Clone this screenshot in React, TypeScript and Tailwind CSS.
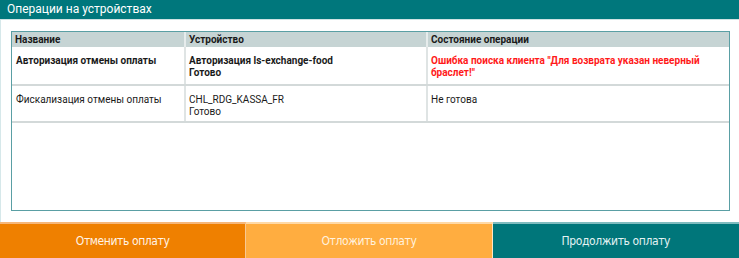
import React from "react";

const rows = [
  {
    name: "Авторизация отмены оплаты",
    device: ["Авторизация ls-exchange-food", "Готово"],
    state: 'Ошибка поиска клиента "Для возврата указан неверный браслет!"',
    error: true,
    h: "h-[39px]",
  },
  {
    name: "Фискализация отмены оплаты",
    device: ["CHL_RDG_KASSA_FR", "Готово"],
    state: "Не готова",
    error: false,
    h: "h-[37px]",
  },
];

const App = () => {
  return (
    <div className="w-[739px] h-[258px] flex flex-col bg-white font-['Roboto',sans-serif] text-[#1a1a1a]">
      <div className="h-[20px] bg-[#00777c] border-b border-[#cfe2e3] pl-[7px] text-white text-[12px] leading-[19px]">
        Операции на устройствах
      </div>
      <div className="flex-1 flex flex-col border-l border-[#d6e8ea] pl-[10px] pr-[9px] pt-[11px] pb-[11px]">
        <div className="flex-1 border border-[#5a9fa4] bg-white">
          <div className="grid grid-cols-[174px_242px_1fr] bg-[#c6d4d4] h-[15px] text-[10px] font-bold leading-[15px]">
            <div className="pl-[3px] border-r-2 border-[#e6ecec]">Название</div>
            <div className="pl-[3px] border-r-2 border-[#e6ecec]">Устройство</div>
            <div className="pl-[3px]">Состояние операции</div>
          </div>
          {rows.map((row, i) => (
            <div
              key={i}
              className={`grid grid-cols-[174px_242px_1fr] border-b-2 border-[#d3d9d9] text-[10px] leading-[12px] ${row.h}`}
            >
              <div className={`pl-[4px] pt-[8px] border-r-2 border-[#dfe4e4] ${row.error ? "font-bold" : ""}`}>
                {row.name}
              </div>
              <div className={`pl-[3px] pt-[8px] border-r-2 border-[#dfe4e4] ${row.error ? "font-bold" : ""}`}>
                {row.device.map((d, j) => (
                  <div key={j}>{d}</div>
                ))}
              </div>
              <div
                className={`pl-[3px] pr-[8px] pt-[8px] ${row.error ? "font-bold text-[#ff1a1a]" : ""}`}
              >
                {row.state}
              </div>
            </div>
          ))}
        </div>
      </div>
      <div className="h-[36px] grid grid-cols-3 text-[12px] tracking-[-0.4px] font-['DejaVu_Sans_Condensed','DejaVu_Sans',sans-serif] [font-stretch:condensed]">
        <button className="bg-[#ef8000] border-t-2 border-[#f6b77a] text-[#fff3e6] border-r border-r-[#f8c893]">
          Отменить оплату
        </button>
        <button className="bg-[#ffad40] border-t-2 border-[#ffd9a6] text-[#fff1de] border-r border-r-[#ffe6c4]">
          Отложить оплату
        </button>
        <button className="bg-[#00767a] border-t-2 border-[#7fbcbf] text-[#e3f2f3]">
          Продолжить оплату
        </button>
      </div>
    </div>
  );
};

export default App;
